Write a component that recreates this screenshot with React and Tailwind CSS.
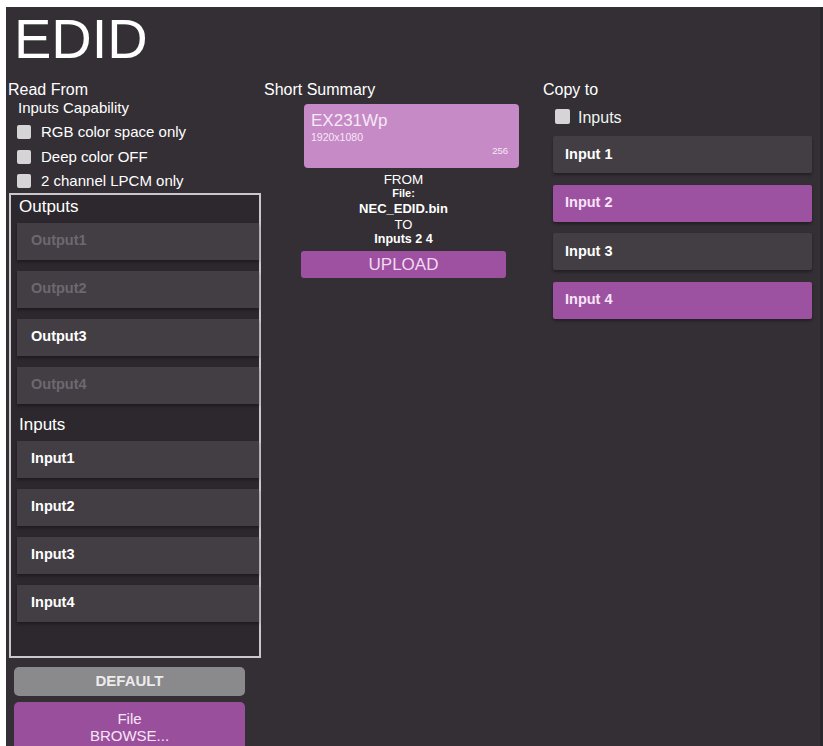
const outputs = [
  { label: "Output1", on: false },
  { label: "Output2", on: false },
  { label: "Output3", on: true },
  { label: "Output4", on: false },
];
const inputs = ["Input1", "Input2", "Input3", "Input4"];
const copyTo = [
  { label: "Input 1", sel: false },
  { label: "Input 2", sel: true },
  { label: "Input 3", sel: false },
  { label: "Input 4", sel: true },
];

function Box({ className = "" }) {
  return <span className={`inline-block bg-[#d6d4d6] rounded-[2px] ${className}`} />;
}

function PanelButton({ children, dim }) {
  return (
    <div className="ml-[6px] h-[37px] bg-[#423e44] shadow-[0_2px_3px_rgba(0,0,0,0.35)] flex items-center pl-[14px]">
      <span className={`text-[14.5px] font-bold ${dim ? "text-[#6c6870]" : "text-white"}`}>{children}</span>
    </div>
  );
}

export default function App() {
  return (
    <div className="w-[823px] h-[746px] bg-white pt-[7px] pl-[6px] overflow-hidden font-['Liberation_Sans',Arial,sans-serif]">
      <div className="h-full bg-[#332f35] border-r-[3px] border-[#29262b] pl-[2px] text-white">
        <h1 className="text-[56px] leading-none pt-[4px] pl-[6px] text-white font-normal">EDID</h1>

        <div className="flex items-start mt-[14px]">
          {/* read from */}
          <div className="w-[256px] shrink-0">
            <div className="text-[16px] leading-[18px]">Read From</div>
            <div className="text-[15px] leading-[18px] pl-[10px]">Inputs Capability</div>
            <div className="pt-[3px]">
              {["RGB color space only", "Deep color OFF", "2 channel LPCM only"].map((t) => (
                <div key={t} className="h-[24.5px] flex items-center pl-[9px]">
                  <Box className="w-[14px] h-[14px] mr-[10px]" />
                  <span className="text-[15px]">{t}</span>
                </div>
              ))}
            </div>

            <div className="-mt-[1px] ml-[1px] w-[252px] h-[465px] border-2 border-[#cbc8cb] bg-[#2c282d]">
              <div className="pt-[2px] pl-[8px] text-[17px] leading-[20px] mb-[6px]">Outputs</div>
              <div className="flex flex-col gap-[11px]">
                {outputs.map((o) => (
                  <PanelButton key={o.label} dim={!o.on}>{o.label}</PanelButton>
                ))}
              </div>
              <div className="pt-[11px] pl-[8px] text-[17px] leading-[20px] mb-[6px]">Inputs</div>
              <div className="flex flex-col gap-[11px]">
                {inputs.map((i) => (
                  <PanelButton key={i}>{i}</PanelButton>
                ))}
              </div>
            </div>

            <div className="mt-[9px] ml-[6px] w-[231px] h-[29px] rounded-[5px] bg-[#8a898c] flex items-center justify-center text-[15px] font-bold text-[#ececec]">
              DEFAULT
            </div>
            <div className="mt-[6px] ml-[6px] w-[231px] h-[48px] rounded-[5px] bg-[#9a4f9d] pt-[8px] text-center text-[15px] leading-[17px] text-[#f6e6f6]">
              <div>File</div>
              <div>BROWSE...</div>
            </div>
          </div>

          {/* short summary */}
          <div className="w-[279px] shrink-0">
            <div className="text-[16px] leading-[18px]">Short Summary</div>
            <div className="mt-[5px] ml-[40px] w-[215px] h-[64px] rounded-[4px] bg-[#c68bc6] pl-[7px] pr-[11px] pt-[8px] text-[#f6e8f6]">
              <div className="text-[17px] leading-[18px]">EX231Wp</div>
              <div className="text-[10.5px] leading-[14px]">1920x1080</div>
              <div className="text-[9.5px] leading-[12px] text-right mt-[1px]">256</div>
            </div>
            <div className="mt-[4px] ml-[37px] w-[205px] text-center text-white">
              <div className="text-[13.5px] leading-[15px]">FROM</div>
              <div className="text-[11px] leading-[12px] font-bold">File:</div>
              <div className="text-[13px] leading-[19px] font-bold">NEC_EDID.bin</div>
              <div className="text-[13px] leading-[14px]">TO</div>
              <div className="text-[12.5px] leading-[14px] font-bold">Inputs 2 4</div>
            </div>
            <div className="mt-[5px] ml-[37px] w-[205px] h-[27px] rounded-[3px] bg-[#9d51a0] flex items-center justify-center text-[17px] text-[#f3d8f3]">
              UPLOAD
            </div>
          </div>

          {/* copy to */}
          <div className="flex-1">
            <div className="text-[16px] leading-[18px]">Copy to</div>
            <div className="h-[37px] flex items-center pl-[12px]">
              <Box className="w-[15px] h-[15px] mr-[8px] -mt-[3px]" />
              <span className="text-[16px] text-[#eef5ee]">Inputs</span>
            </div>
            <div className="flex flex-col gap-[11.5px]">
              {copyTo.map((c) => (
                <div
                  key={c.label}
                  className={`ml-[10px] w-[259px] h-[37px] rounded-[2px] flex items-center pl-[12px] shadow-[0_2px_3px_rgba(0,0,0,0.35)] ${c.sel ? "bg-[#9d52a1]" : "bg-[#423e44]"}`}
                >
                  <span className={`text-[14.5px] font-bold ${c.sel ? "text-[#f8e4f8]" : "text-white"}`}>{c.label}</span>
                </div>
              ))}
            </div>
          </div>
        </div>
      </div>
    </div>
  );
}
